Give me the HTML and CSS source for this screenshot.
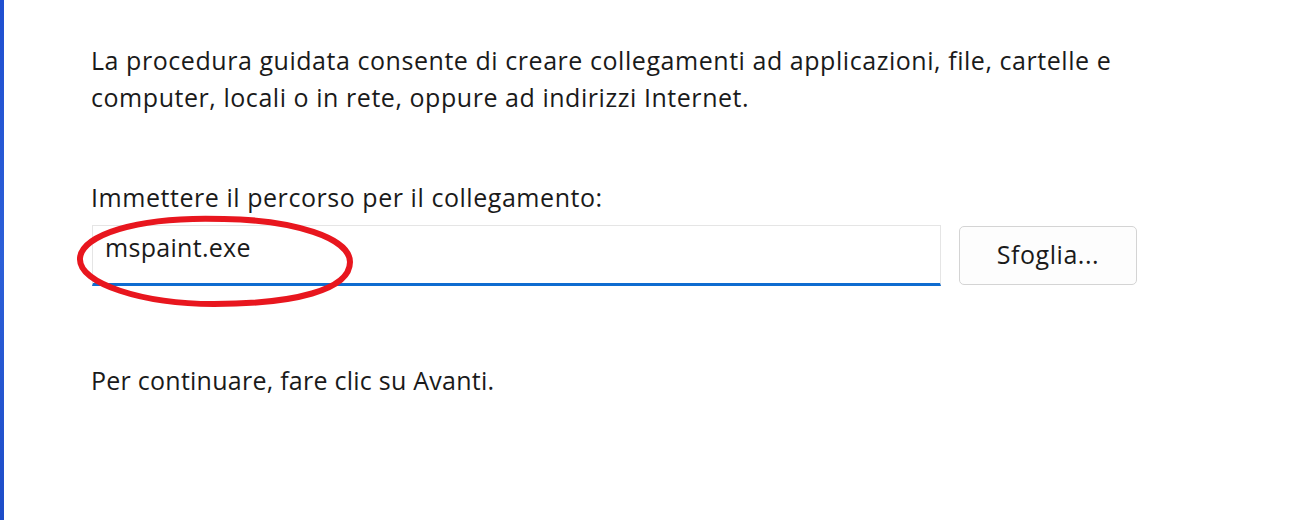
FILE: index.html
```html
<!DOCTYPE html>
<html lang="it">
<head>
<meta charset="utf-8">
<link rel="stylesheet" href="styles.css">
</head>
<body>
<div class="window">
  <div class="edge"></div>
  <main class="content">
    <p class="intro">La procedura guidata consente di creare collegamenti ad applicazioni, file, cartelle e<br>computer, locali o in rete, oppure ad indirizzi Internet.</p>
    <label class="label" for="path">Immettere il percorso per il collegamento:</label>
    <div class="row">
      <div class="field">
        <input id="path" class="input" type="text" value="mspaint.exe">
        <svg class="mark" width="290" height="100" viewBox="0 0 290 100">
          <path d="M150 7 C 60 4, 8 24, 6 46 C 4 72, 70 92, 140 92 C 220 92, 276 78, 276 50 C 276 26, 220 8, 150 7 Z" fill="none" stroke="#e8161e" stroke-width="6"/>
        </svg>
      </div>
      <button class="btn" type="button">Sfoglia...</button>
    </div>
    <p class="next">Per continuare, fare clic su Avanti.</p>
  </main>
</div>
</body>
</html>
```

FILE: styles.css
```css
* { box-sizing: border-box; }
html, body { margin: 0; padding: 0; background: #ffffff; }
body {
  width: 1292px;
  height: 520px;
  overflow: hidden;
  font-family: "Open Sans", "Noto Sans", "DejaVu Sans", sans-serif;
  font-size: 25px;
  letter-spacing: 0.55px;
  color: #1a1a1a;
}
.window { display: flex; height: 520px; }
.edge {
  width: 4px;
  flex: none;
  background: linear-gradient(#1f4fd0, #2c5fd8 50%, #1d4cc8);
}
.content {
  padding: 42px 0 0 87px;
  flex: 1;
}
.intro {
  margin: 0;
  white-space: nowrap;
  line-height: 37px;
}
.label {
  display: block;
  margin-top: 67px;
  line-height: 28px;
}
.row {
  display: flex;
  align-items: flex-start;
  gap: 18px;
  margin-top: 14px;
  margin-left: 1px;
}
.field { position: relative; width: 849px; height: 61px; }
.input {
  width: 849px;
  height: 61px;
  border: 1px solid #e5e5e5;
  border-bottom: 3px solid #0f6cd0;
  padding: 0 12px 16px 12px;
  font: inherit;
  letter-spacing: 0.3px;
  color: #1a1a1a;
  background: #fff;
  outline: none;
}
.mark {
  position: absolute;
  left: -18px;
  top: -13px;
  pointer-events: none;
}
.btn {
  width: 178px;
  height: 59px;
  margin-top: 1px;
  border: 1px solid #d4d4d4;
  border-radius: 5px;
  background: #fdfdfd;
  font: inherit;
  letter-spacing: inherit;
  color: #1a1a1a;
  padding: 0 0 4px 0;
}
.next {
  margin: 80px 0 0 0;
  line-height: 28px;
  letter-spacing: 0.25px;
}
```
